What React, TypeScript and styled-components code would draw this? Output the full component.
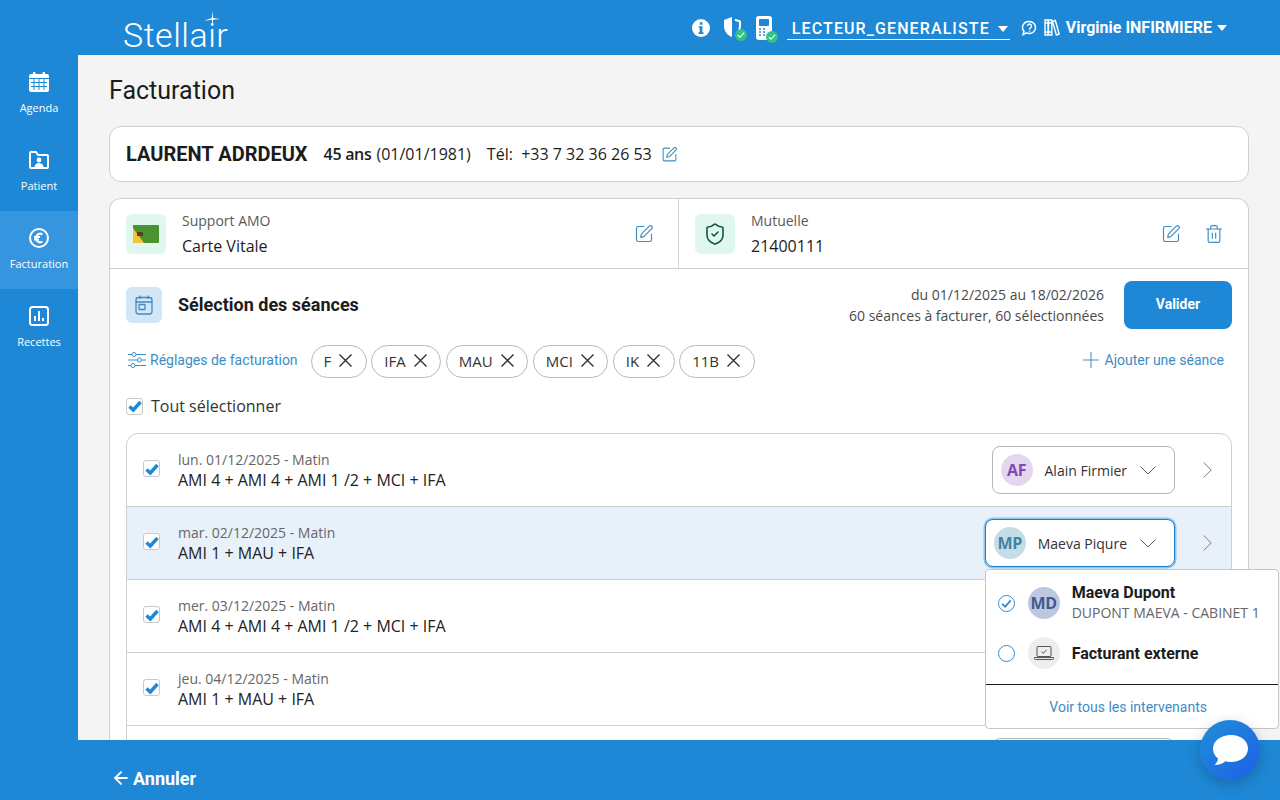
import React from "react";
import styled, { createGlobalStyle } from "styled-components";
import { SquarePen, Trash2, ShieldCheck, ArrowLeft } from "lucide-react";

const BLUE = "#1e88d6";
const LINK = "#3c8dc5";
const SANS = `"Open Sans", "Noto Sans", sans-serif`;
const ROBOTO = `Roboto, "Liberation Sans", sans-serif`;

const Global = createGlobalStyle`
  html, body { margin: 0; height: 100%; overflow: hidden; }
  #root { height: 100%; }
  * { box-sizing: border-box; }
  body { font-family: ${SANS}; color: #1c1c1c; background: #f4f4f4; }
`;

const Shell = styled.div`
  position: relative;
  display: grid;
  grid-template-columns: 78px 1fr;
  grid-template-rows: 55px 1fr 60px;
  height: 100vh;
  width: 100vw;
  overflow: hidden;
`;
const Header = styled.header`
  grid-column: 1 / 3;
  background: ${BLUE};
  display: flex;
  align-items: center;
  padding: 0 53px 0 123px;
  color: #fff;
`;
const Logo = styled.div`
  position: relative;
  font: 300 34px/1 ${ROBOTO};
  letter-spacing: 0.5px;
  margin-top: 14px;
  color: #fff;
`;
const Star = styled.svg`
  position: absolute;
  top: -7px;
  left: 81px;
`;
const HeaderRight = styled.div`
  margin-left: auto;
  display: flex;
  align-items: center;
  font-family: ${ROBOTO};
`;
const IconSlot = styled.span<{ $mr: number }>`
  position: relative;
  display: inline-flex;
  margin-right: ${(p) => p.$mr}px;
`;
const OkBadge = styled.span`
  position: absolute;
  right: -6px;
  bottom: -3px;
  width: 12px;
  height: 12px;
  border-radius: 50%;
  background: #2fc38a;
  display: flex;
  align-items: center;
  justify-content: center;
`;
const Reader = styled.div`
  display: flex;
  align-items: center;
  gap: 8px;
  height: 22px;
  padding: 0 2px 0 5px;
  border-bottom: 1px solid #fff;
  font: 500 16px/20px ${ROBOTO};
  letter-spacing: 1.1px;
  margin-top: 3px;
  margin-right: 11px;
`;
const Caret = styled.span`
  width: 0;
  height: 0;
  border-left: 5.5px solid transparent;
  border-right: 5.5px solid transparent;
  border-top: 6px solid #fff;
`;
const UserName = styled.span`
  font: 700 16px/20px ${ROBOTO};
  margin-right: 5px;
`;

const Side = styled.nav`
  background: ${BLUE};
  display: flex;
  flex-direction: column;
`;
const SideItem = styled.div<{ $active?: boolean }>`
  height: 78px;
  display: flex;
  flex-direction: column;
  align-items: center;
  padding-top: 15px;
  gap: 6px;
  color: #fff;
  font: 400 11px/16px ${SANS};
  background: ${(p) => (p.$active ? "#3595de" : "transparent")};
`;
const SideIcon = styled.span`
  height: 24px;
  display: flex;
  align-items: center;
`;

const Main = styled.main`
  overflow: hidden;
  padding: 20px 31px 0;
  background: #f4f4f4;
`;
const Title = styled.h1`
  margin: 0 0 21px;
  font: 400 25px/31px ${ROBOTO};
  height: 30px;
  color: #1c1c1c;
`;
const PatientCard = styled.section`
  height: 56px;
  background: #fff;
  border: 1px solid #cfcfcf;
  border-radius: 12px;
  display: flex;
  align-items: center;
  padding: 0 16px;
  margin-bottom: 16px;
  font-size: 16px;
`;
const PatientName = styled.strong`
  font: 700 20px/24px ${ROBOTO};
  margin-right: 16px;
`;
const Age = styled.span`
  font-weight: 600;
  letter-spacing: -0.3px;
  margin-right: 5px;
`;
const Phone = styled.span`
  margin: 0 9px 0 16px;
`;
const Card = styled.section`
  background: #fff;
  border: 1px solid #cfcfcf;
  border-radius: 12px 12px 0 0;
  border-bottom: none;
`;
const Supports = styled.div`
  display: grid;
  grid-template-columns: 568px 1fr;
  height: 70px;
  border-bottom: 1px solid #cfcfcf;
`;
const Support = styled.div<{ $divider?: boolean }>`
  display: flex;
  align-items: center;
  gap: 16px;
  padding: 0 24px 0 16px;
  border-left: ${(p) => (p.$divider ? "1px solid #d6d6d6" : "none")};
`;
const Tile = styled.div<{ $bg: string; $size: number }>`
  width: ${(p) => p.$size}px;
  height: ${(p) => p.$size}px;
  flex: none;
  border-radius: 6px;
  background: ${(p) => p.$bg};
  display: flex;
  align-items: center;
  justify-content: center;
`;
const SupportText = styled.div`
  flex: 1;
  display: flex;
  flex-direction: column;
  gap: 4px;
`;
const SupportLabel = styled.span`
  font-size: 14px;
  line-height: 20px;
  color: #5a5a5a;
`;
const SupportValue = styled.span`
  font-size: 16px;
  line-height: 22px;
`;
const Actions = styled.div`
  display: flex;
  gap: 23px;
  color: ${LINK};
`;
const Selection = styled.div`
  padding: 12px 16px 0;
`;
const SelectionHead = styled.div`
  height: 48px;
  display: flex;
  align-items: center;
  gap: 16px;
`;
const SelectionTitle = styled.h2`
  margin: 0;
  flex: 1;
  font: 700 18px/24px ${ROBOTO};
`;
const Summary = styled.div`
  text-align: right;
  font-size: 14px;
  line-height: 21px;
  color: #4a4a4a;
  margin-right: 4px;
`;
const Validate = styled.button`
  width: 108px;
  height: 48px;
  border: none;
  border-radius: 8px;
  background: ${BLUE};
  color: #fff;
  padding: 0 0 2px;
  font: 700 14px ${ROBOTO};
`;
const ChipsRow = styled.div`
  display: flex;
  align-items: center;
  gap: 4.5px;
  height: 33px;
  margin-top: 16px;
`;
const LinkText = styled.span`
  display: inline-flex;
  align-items: center;
  gap: 4px;
  margin-bottom: 3px;
  color: ${LINK};
  font: 400 14px/20px ${ROBOTO};
`;
const Settings = styled(LinkText)`
  margin-left: 2px;
  margin-right: 8.5px;
`;
const AddLink = styled(LinkText)`
  margin-left: auto;
  margin-right: 8px;
  gap: 6px;
`;
const Chip = styled.span`
  height: 33px;
  display: inline-flex;
  align-items: center;
  gap: 8px;
  padding: 0 13.5px 2px 12px;
  border: 1px solid #b9b9b9;
  border-radius: 17px;
  font-size: 15px;
  color: #333;
`;
const SelectAll = styled.label`
  display: flex;
  align-items: center;
  gap: 8px;
  height: 20px;
  margin: 18px 0 17px;
  font-size: 16px;
  line-height: 20px;
  color: #333;
`;
const Box = styled.span`
  width: 17px;
  height: 17px;
  flex: none;
  background: #fff;
  border: 1px solid #c9c9c9;
  border-radius: 3px;
  display: flex;
  align-items: center;
  justify-content: center;
`;
const RowBox = styled(Box)`
  margin: -3px 0 0 -1px;
`;
const List = styled.div`
  border: 1px solid #cfcfcf;
  border-radius: 12px 12px 0 0;
`;
const Row = styled.div<{ $selected?: boolean }>`
  height: 73px;
  display: flex;
  align-items: center;
  padding: 0 19px 0 17px;
  gap: 18px;
  border-bottom: 1px solid #cfcfcf;
  background: ${(p) => (p.$selected ? "#e8f1fa" : "transparent")};
  &:first-child { border-radius: 12px 12px 0 0; }
`;
const RowText = styled.div`
  flex: 1;
  display: flex;
  flex-direction: column;
`;
const RowDate = styled.span`
  font-size: 14px;
  line-height: 20px;
  color: #666;
`;
const RowActs = styled.span`
  font-size: 16px;
  line-height: 21px;
  color: #222;
`;
const SelectWrap = styled.div<{ $open?: boolean }>`
  position: relative;
  z-index: ${(p) => (p.$open ? 5 : 1)};
  margin-right: 10px;
`;
const Select = styled.div<{ $open?: boolean }>`
  height: 48px;
  display: flex;
  align-items: center;
  gap: 12px;
  padding: 0 18px 0 8px;
  background: #fff;
  border: 1px solid ${(p) => (p.$open ? "#1f7fc4" : "#b5b5b5")};
  border-radius: 8px;
  box-shadow: ${(p) => (p.$open ? "0 0 0 1.5px #8cc4ec" : "none")};
  font-size: 14px;
  color: #333;
`;
const BlankSelect = styled(Select)`
  width: 183px;
`;
const Chevron = styled.svg`
  margin-left: 1px;
`;
const Avatar = styled.span<{ $bg: string; $fg: string }>`
  width: 32px;
  height: 32px;
  flex: none;
  border-radius: 50%;
  background: ${(p) => p.$bg};
  color: ${(p) => p.$fg};
  display: flex;
  align-items: center;
  justify-content: center;
  font: 700 16px ${SANS};
  letter-spacing: -0.3px;
`;
const Menu = styled.div`
  position: absolute;
  top: calc(100% + 2px);
  left: 0;
  width: 294px;
  height: 160px;
  background: #fff;
  border: 1px solid #c5c5c5;
  border-radius: 4px;
  display: flex;
  flex-direction: column;
`;
const MenuItems = styled.div`
  height: 115px;
  border-bottom: 1px solid #1a1a1a;
  padding-top: 8px;
`;
const MenuItem = styled.div`
  height: 50px;
  display: flex;
  align-items: center;
  padding-left: 12px;
`;
const Radio = styled.span`
  width: 17px;
  height: 17px;
  flex: none;
  border-radius: 50%;
  border: 1px solid ${LINK};
  margin-right: 13px;
  display: flex;
  align-items: center;
  justify-content: center;
`;
const MenuText = styled.div<{ $single?: boolean }>`
  margin-left: 12px;
  padding-top: ${(p) => (p.$single ? 2 : 0)}px;
  display: flex;
  flex-direction: column;
`;
const MenuName = styled.span`
  font: 700 16px/20px ${ROBOTO};
  color: #1c1c1c;
`;
const MenuSub = styled.span`
  font-size: 14px;
  line-height: 20px;
  color: #666;
`;
const MenuFoot = styled.div`
  flex: 1;
  display: flex;
  align-items: center;
  justify-content: center;
  padding-right: 7px;
  color: ${LINK};
  font: 400 14px ${ROBOTO};
`;
const Footer = styled.footer`
  grid-column: 1 / 3;
  position: relative;
  z-index: 6;
  background: ${BLUE};
  color: #fff;
  display: flex;
  align-items: center;
  gap: 2px;
  padding: 16px 0 0 111px;
  font: 700 18px ${ROBOTO};
`;
const Fab = styled.div`
  position: absolute;
  z-index: 7;
  left: 1200px;
  top: 720px;
  width: 60px;
  height: 60px;
  border-radius: 50%;
  background: linear-gradient(135deg, #1e8fd8, #1f5fe8);
  box-shadow: 0 4px 14px rgba(0, 0, 0, 0.22);
  display: flex;
  align-items: center;
  justify-content: center;
`;

const Tick = ({ size = 14, color = "#1e88d6", sw = 3.4 }: { size?: number; color?: string; sw?: number }) => (
  <svg width={size} height={size} viewBox="0 0 14 14" fill="none">
    <path d="M1.500 7.500 5.300 11 12.500 3" stroke={color} strokeWidth={sw} />
  </svg>
);

const AgendaIcon = () => (
  <svg width="22" height="22" viewBox="0 0 22 22">
    <path fill="#fff" d="M5 1h2.400v2h7.200V1H17v2h2a2 2 0 0 1 2 2v14a2 2 0 0 1-2 2H3a2 2 0 0 1-2-2V5a2 2 0 0 1 2-2h2z" />
    <path stroke={BLUE} strokeWidth="1" fill="none" d="M1 7.500h20M3 11.500h16M3 15.500h16M6 8v11M11 8v11M16 8v11" />
  </svg>
);
const PatientIcon = () => (
  <svg width="22" height="20" viewBox="0 0 22 20" fill="none">
    <path stroke="#fff" strokeWidth="2" d="M2 3a1 1 0 0 1 1-1h5l2 3h9a1 1 0 0 1 1 1v11a1 1 0 0 1-1 1H3a1 1 0 0 1-1-1z" />
    <circle cx="11" cy="10" r="2.400" fill="#fff" />
    <path fill="#fff" d="M6.500 17c.3-2.800 2-4 4.500-4s4.200 1.200 4.500 4z" />
  </svg>
);
const EuroIcon = () => (
  <svg width="22" height="22" viewBox="0 0 22 22" fill="none">
    <circle cx="11" cy="11" r="9" stroke="#fff" strokeWidth="2" />
    <path stroke="#fff" strokeWidth="2" d="M14.500 7.500a4.200 4.200 0 1 0 0 7M6 10h6M6 12.500h5" />
  </svg>
);
const ChartIcon = () => (
  <svg width="20" height="20" viewBox="0 0 20 20" fill="none">
    <rect x="1" y="1" width="18" height="18" rx="2.500" stroke="#fff" strokeWidth="2" />
    <path stroke="#fff" strokeWidth="2" d="M6 15v-5M10 15V5M14 15v-3" />
  </svg>
);
const ShieldIcon = () => (
  <svg width="18" height="21" viewBox="0 0 18 21">
    <path fill="#fff" d="M9 0 1 3v6c0 5 3.200 9.500 8 11z" />
    <path fill="none" stroke="#fff" strokeWidth="2" d="M12 2.800 17 4.500V9c0 2-.6 4-1.700 5.800" />
  </svg>
);
const ReaderIcon = () => (
  <svg width="16" height="24" viewBox="0 0 16 24">
    <path fill="#fff" d="M3 0h10a3 3 0 0 1 3 3v18a3 3 0 0 1-3 3H3a3 3 0 0 1-3-3V3a3 3 0 0 1 3-3z" />
    <rect x="3" y="3" width="10" height="7" rx="1" fill={BLUE} />
    <path stroke={BLUE} strokeWidth="1.600" d="M3 13h2M7 13h2M3 16h2M7 16h2M3 19h2M7 19h2" />
  </svg>
);
const QuestionIcon = () => (
  <svg width="16" height="16" viewBox="0 0 16 16" fill="none">
    <path stroke="#fff" strokeWidth="1.500" d="M8.500 1.500a6 6 0 0 1 0 12c-1 0-2-.2-2.800-.7L2 14.500l1-3.200A6 6 0 0 1 8.500 1.500z" />
    <path stroke="#fff" strokeWidth="1.400" d="M6.500 6a2 2 0 1 1 3 1.800c-.8.500-1 .8-1 1.700M8.500 10.500v1.200" />
  </svg>
);
const BooksIcon = () => (
  <svg width="16" height="17" viewBox="0 0 16 17" fill="none">
    <path stroke="#fff" strokeWidth="1.400" d="M1 1h3v15H1zM4.500 1h3.300v15H4.500zM8.500 2.500l2.800-1 3.900 13.500-2.800 1zM1 4h3M4.500 4h3.300M1 13h3M4.500 13h3.300" />
  </svg>
);
const VitaleIcon = () => (
  <svg width="26" height="18" viewBox="0 0 26 18">
    <rect width="26" height="18" rx="1" fill="#4a9330" />
    <path d="M0 3 11 18H1a1 1 0 0 1-1-1z" fill="#f7c23c" />
    <rect x="4" y="7" width="6" height="4" fill="#5b3f16" />
  </svg>
);
const SessionIcon = () => (
  <svg width="20" height="22" viewBox="0 0 20 22" fill="none" stroke="#3f8ac4" strokeWidth="1.300">
    <rect x="2" y="3.500" width="16" height="16.500" rx="2.500" />
    <path d="M2 8h16M6 1.500v3.500M14 1.500v3.500" />
    <rect x="5" y="10.500" width="6" height="5" rx="0.500" />
  </svg>
);
const SlidersIcon = () => (
  <svg width="18" height="16" viewBox="0 0 18 16" fill="none" stroke={LINK} strokeWidth="1">
    <path d="M0 2.500h4M8 2.500h10M0 8h9.500M13.500 8H18M0 13.500h3M7 13.500h11" />
    <circle cx="6" cy="2.500" r="2" />
    <circle cx="11.500" cy="8" r="2" />
    <circle cx="5" cy="13.500" r="2" />
  </svg>
);
const PlusIcon = () => (
  <svg width="16" height="16" viewBox="0 0 16 16" stroke={LINK} strokeWidth="1">
    <path d="M8 0v16M0 8h16" />
  </svg>
);
const CloseIcon = () => (
  <svg width="13" height="13" viewBox="0 0 13 13" stroke="#2a2a2a" strokeWidth="1.300">
    <path d="M.5.500l12 12M12.500.500l-12 12" />
  </svg>
);
const ChevronDownIcon = () => (
  <Chevron width="16" height="9" viewBox="0 0 16 9" fill="none" stroke="#5c5c5c" strokeWidth="1">
    <path d="M.5.500 8 8l7.500-7.500" />
  </Chevron>
);
const ChevronRightIcon = () => (
  <svg width="9" height="16" viewBox="0 0 9 16" fill="none" stroke="#7a7a7a" strokeWidth="1">
    <path d="M.7.500 8.200 8 .7 15.500" />
  </svg>
);
const LaptopIcon = () => (
  <svg width="20" height="16" viewBox="0 0 20 16" fill="none">
    <rect x="3" y="1.500" width="14" height="10" rx="1" stroke="#555" />
    <path stroke="#555" d="M7.500 6.500 9.300 8.300 12.500 4.800M.5 12.500h19v1a1 1 0 0 1-1 1h-17a1 1 0 0 1-1-1z" />
  </svg>
);
const ChatIcon = () => (
  <svg width="38" height="34" viewBox="0 0 38 34">
    <path fill="#fff" d="M20 2c9.500 0 17 5.600 17 13.500S29.500 29 20 29c-2 0-3.800-.2-5.500-.7C12 30.500 8 32 3.500 32c2-1.700 3.200-4 3.500-6.500C3.800 23 2 19.500 2 15.500 2 7.600 10.500 2 20 2z" />
  </svg>
);

const chips = ["F", "IFA", "MAU", "MCI", "IK", "11B"];
const long = "AMI 4 + AMI 4 + AMI 1 /2 + MCI + IFA";
const short = "AMI 1 + MAU + IFA";
const rows = [
  { date: "lun. 01/12/2025 - Matin", acts: long, person: "af" },
  { date: "mar. 02/12/2025 - Matin", acts: short, person: "mp" },
  { date: "mer. 03/12/2025 - Matin", acts: long },
  { date: "jeu. 04/12/2025 - Matin", acts: short },
];

const PersonMenu = () => (
  <Menu>
    <MenuItems>
      <MenuItem>
        <Radio><Tick size={11} color={LINK} sw={2.400} /></Radio>
        <Avatar $bg="#bcc7e2" $fg="#44598f">MD</Avatar>
        <MenuText>
          <MenuName>Maeva Dupont</MenuName>
          <MenuSub>DUPONT MAEVA - CABINET 1</MenuSub>
        </MenuText>
      </MenuItem>
      <MenuItem>
        <Radio />
        <Avatar $bg="#eeeeee" $fg="#555"><LaptopIcon /></Avatar>
        <MenuText $single><MenuName>Facturant externe</MenuName></MenuText>
      </MenuItem>
    </MenuItems>
    <MenuFoot>Voir tous les intervenants</MenuFoot>
  </Menu>
);

export default function App() {
  return (
    <Shell>
      <Global />
      <Header>
        <Logo>
          Stellair
          <Star width="16" height="16" viewBox="0 0 16 16">
            <path fill="#fff" d="M8.600 0l.5 7L16 8l-6.900.7-.5 7.300-.7-7.200L0 9.800l7.900-2.700z" />
          </Star>
        </Logo>
        <HeaderRight>
          <IconSlot $mr={13}>
            <svg width="18" height="18" viewBox="0 0 18 18">
              <circle cx="9" cy="9" r="9" fill="#fff" />
              <path fill={BLUE} d="M7.800 3.300h2.600v2.400H7.800zM6.800 7.300h3.600v6h1.100v1.600h-5v-1.600h1.200V8.900H6.800z" />
            </svg>
          </IconSlot>
          <IconSlot $mr={15}>
            <ShieldIcon />
            <OkBadge><Tick size={8} color="#fff" sw={2} /></OkBadge>
          </IconSlot>
          <IconSlot $mr={15}>
            <ReaderIcon />
            <OkBadge><Tick size={8} color="#fff" sw={2} /></OkBadge>
          </IconSlot>
          <Reader>
            LECTEUR_GENERALISTE <Caret />
          </Reader>
          <IconSlot $mr={7}><QuestionIcon /></IconSlot>
          <IconSlot $mr={6}><BooksIcon /></IconSlot>
          <UserName>Virginie INFIRMIERE</UserName>
          <Caret />
        </HeaderRight>
      </Header>
      <Side>
        <SideItem><SideIcon><AgendaIcon /></SideIcon>Agenda</SideItem>
        <SideItem><SideIcon><PatientIcon /></SideIcon>Patient</SideItem>
        <SideItem $active><SideIcon><EuroIcon /></SideIcon>Facturation</SideItem>
        <SideItem><SideIcon><ChartIcon /></SideIcon>Recettes</SideItem>
      </Side>
      <Main>
        <Title>Facturation</Title>
        <PatientCard>
          <PatientName>LAURENT ADRDEUX</PatientName>
          <Age>45 ans</Age>
          <span>(01/01/1981)</span>
          <Phone>Tél:&nbsp; +33 7 32 36 26 53</Phone>
          <SquarePen size={17} color={LINK} strokeWidth={1.5} />
        </PatientCard>
        <Card>
          <Supports>
            <Support>
              <Tile $bg="#dff7ee" $size={40}><VitaleIcon /></Tile>
              <SupportText>
                <SupportLabel>Support AMO</SupportLabel>
                <SupportValue>Carte Vitale</SupportValue>
              </SupportText>
              <Actions><SquarePen size={20} strokeWidth={1.4} /></Actions>
            </Support>
            <Support $divider>
              <Tile $bg="#dff7ee" $size={40}><ShieldCheck size={24} color="#14553f" strokeWidth={1.6} /></Tile>
              <SupportText>
                <SupportLabel>Mutuelle</SupportLabel>
                <SupportValue>21400111</SupportValue>
              </SupportText>
              <Actions>
                <SquarePen size={20} strokeWidth={1.4} />
                <Trash2 size={20} strokeWidth={1.4} />
              </Actions>
            </Support>
          </Supports>
          <Selection>
            <SelectionHead>
              <Tile $bg="#d3e6f5" $size={36}><SessionIcon /></Tile>
              <SelectionTitle>Sélection des séances</SelectionTitle>
              <Summary>
                du 01/12/2025 au 18/02/2026<br />
                60 séances à facturer, 60 sélectionnées
              </Summary>
              <Validate>Valider</Validate>
            </SelectionHead>
            <ChipsRow>
              <Settings><SlidersIcon />Réglages de facturation</Settings>
              {chips.map((c) => (
                <Chip key={c}>{c}<CloseIcon /></Chip>
              ))}
              <AddLink><PlusIcon />Ajouter une séance</AddLink>
            </ChipsRow>
            <SelectAll><Box><Tick /></Box>Tout sélectionner</SelectAll>
            <List>
              {rows.map((r) => (
                <Row key={r.date} $selected={r.person === "mp"}>
                  <RowBox><Tick /></RowBox>
                  <RowText>
                    <RowDate>{r.date}</RowDate>
                    <RowActs>{r.acts}</RowActs>
                  </RowText>
                  {r.person && (
                    <SelectWrap $open={r.person === "mp"}>
                      <Select $open={r.person === "mp"}>
                        {r.person === "mp" ? <Avatar $bg="#c5dde6" $fg="#3f84a5">MP</Avatar> : <Avatar $bg="#e4d6ee" $fg="#7e4bb0">AF</Avatar>}
                        <span>{r.person === "mp" ? "Maeva Piqure" : "Alain Firmier"}</span>
                        <ChevronDownIcon />
                      </Select>
                      {r.person === "mp" && <PersonMenu />}
                    </SelectWrap>
                  )}
                  {r.person && <ChevronRightIcon />}
                </Row>
              ))}
              <Row>
                <RowText />
                <SelectWrap><BlankSelect /></SelectWrap>
                <ChevronRightIcon />
              </Row>
            </List>
          </Selection>
        </Card>
      </Main>
      <Footer><ArrowLeft size={20} strokeWidth={2.4} />Annuler</Footer>
      <Fab><ChatIcon /></Fab>
    </Shell>
  );
}
